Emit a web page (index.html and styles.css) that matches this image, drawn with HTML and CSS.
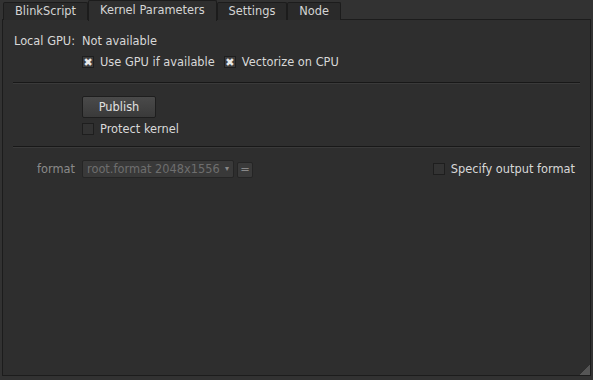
FILE: index.html
```html
<!DOCTYPE html>
<html lang="en">
<head>
  <meta charset="UTF-8">
  <title>BlinkScript – Kernel Parameters</title>
  <link rel="stylesheet" href="styles.css">
</head>
<body>
  <div class="tabs">
    <div class="tab first">BlinkScript</div>
    <div class="tab active">Kernel Parameters</div>
    <div class="tab">Settings</div>
    <div class="tab">Node</div>
  </div>

  <div class="panel">
    <div class="row gpu">
      <span class="label">Local GPU:</span>
      <span>Not available</span>
    </div>
    <div class="row checks">
      <label class="check"><span class="box on">&#10006;</span>Use GPU if available</label>
      <label class="check"><span class="box on">&#10006;</span>Vectorize on CPU</label>
    </div>
    <hr class="sep-1">
    <div class="row">
      <button class="btn">Publish</button>
    </div>
    <div class="row protect">
      <label class="check"><span class="box"></span>Protect kernel</label>
    </div>
    <hr class="sep-2">
    <div class="row format">
      <span class="label dim">format</span>
      <div class="select">root.format 2048x1556 <span class="arrow">&#9662;</span></div>
      <div class="eq">=</div>
      <label class="check right"><span class="box"></span>Specify output format</label>
    </div>
    <div class="grip"></div>
  </div>
</body>
</html>
```

FILE: styles.css
```css
body { margin: 0; background: #323232; color: #d8d8d8; font-family: "DejaVu Sans", Verdana, sans-serif; font-size: 11.4px; width: 593px; height: 380px; overflow: hidden; }
.tabs { display: flex; padding: 0 0 0 3px; height: 19px; position: relative; z-index: 1; }
.tab { padding: 0 11px; height: 17px; margin-top: 2px; line-height: 17px; background: #2a2a2a; border: 1px solid #1c1c1c; border-bottom: none; border-radius: 2px 2px 0 0; color: #d4d4d4; }
.tab.active { background: #2e2e2e; height: 20px; margin-top: 0; line-height: 18px; }
.panel { position: relative; margin: 0 2px; height: 357px; background: #2e2e2e; border: 1px solid #1c1c1c; box-sizing: border-box; padding: 0 10px; }
.row { display: flex; align-items: center; }
.gpu { height: 14px; margin-top: 14px; }
.label { width: 62px; text-align: right; margin-right: 7px; white-space: nowrap; }
.checks { height: 12px; margin-top: 8px; padding-left: 69px; gap: 9px; }
.check { display: flex; align-items: center; gap: 6px; }
.box { width: 10px; height: 10px; border: 1px solid #1e1e1e; background: #333; display: inline-flex; align-items: center; justify-content: center; font-size: 11px; color: #e8e8e8; line-height: 1; overflow: hidden; }
.box.on { background: #3c3c3c; font-weight: bold; }
hr { border: none; border-top: 1px solid #181818; border-bottom: 1px solid #3a3a3a; margin: 0; }
.sep-1 { margin: 14px 0 12px; }
.sep-2 { margin: 11px 0 12px; }
.btn { margin-left: 69px; width: 74px; height: 22px; background: linear-gradient(#4a4a4a, #3a3a3a); border: 1px solid #1e1e1e; border-radius: 2px; color: #e0e0e0; font-family: inherit; font-size: 11.4px; }
.protect { height: 12px; margin-top: 5px; padding-left: 69px; }
.format { height: 18px; }
.dim { color: #8a8a8a; }
.select { width: 152px; height: 18px; box-sizing: border-box; background: #393939; border: 1px solid #252525; border-radius: 2px; color: #6e6e6e; padding-left: 4px; line-height: 16px; display: flex; white-space: nowrap; }
.arrow { margin-left: auto; margin-right: 4px; font-size: 8px; color: #888; }
.eq { width: 16px; height: 16px; box-sizing: border-box; margin: 2px 0 0 3px; background: #3a3a3a; border: 1px solid #252525; border-radius: 2px; color: #888; text-align: center; line-height: 13px; }
.check.right { margin-left: auto; margin-right: 5px; }
.grip { position: absolute; right: 0; bottom: 0; width: 10px; height: 10px; background: linear-gradient(135deg, transparent 50%, #555 50%); }
```
